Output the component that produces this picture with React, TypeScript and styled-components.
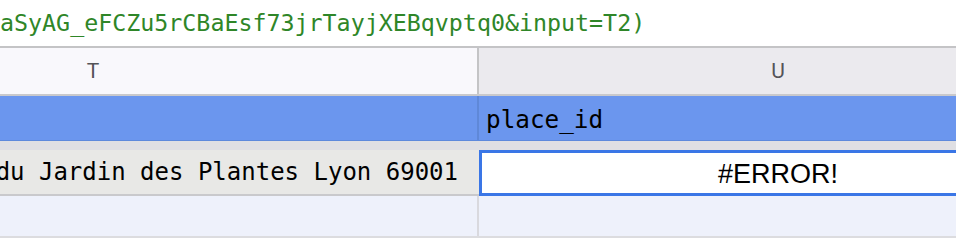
import styled, { createGlobalStyle } from 'styled-components';

const GlobalStyle = createGlobalStyle`
  html, body {
    margin: 0;
    padding: 0;
    background: #ffffff;
    overflow: hidden;
  }
  body {
    width: 956px;
    height: 244px;
  }
`;

const FORMULA = 'aSyAG_eFCZu5rCBaEsf73jrTayjXEBqvptq0&input=T2)';

export default function App() {
  return (
    <>
      <GlobalStyle />
      <Page>
        <FormulaBar>{FORMULA}</FormulaBar>
        <Grid>
          <HeaderRow>
            <HeaderCell $first>T</HeaderCell>
            <HeaderCell $active>U</HeaderCell>
          </HeaderRow>

          <BlueRow>
            <BlueCell $first />
            <BlueCell>place_id</BlueCell>
          </BlueRow>

          <FrozenBar />

          <DataRow>
            <AddressCell>du Jardin des Plantes Lyon 69001</AddressCell>
            <SelectedCell>#ERROR!</SelectedCell>
          </DataRow>

          <EmptyRow>
            <EmptyCell $first />
            <EmptyCell />
          </EmptyRow>
        </Grid>
      </Page>
    </>
  );
}

/* ── Styled components ───────────────────────────────────── */

const Page = styled.div`
  width: 956px;
  height: 244px;
  overflow: hidden;
  display: flex;
  flex-direction: column;
`;

const FormulaBar = styled.div`
  height: 46px;
  display: flex;
  align-items: center;
  padding-bottom: 2px;
  box-sizing: border-box;
  font-family: 'DejaVu Sans Mono', 'Liberation Mono', monospace;
  font-size: 23.3px;
  color: #2f8628;
  white-space: nowrap;
`;

const Grid = styled.div`
  display: flex;
  flex-direction: column;
  width: 1077px;
`;

const HeaderRow = styled.div`
  display: flex;
  height: 50px;
  box-sizing: border-box;
  border-top: 2px solid #c4c4c6;
  border-bottom: 2px solid #c9c9cc;
`;

const HeaderCell = styled.div<{ $first?: boolean; $active?: boolean }>`
  box-sizing: border-box;
  width: ${({ $first }) => ($first ? '479px' : '598px')};
  padding-right: ${({ $first }) => ($first ? '291px' : '0')};
  border-right: ${({ $first }) => ($first ? '2px solid #c4c4c6' : 'none')};
  background: ${({ $active }) => ($active ? '#ebeaee' : '#f9f8fc')};
  display: flex;
  align-items: center;
  justify-content: center;
  font-family: Roboto, 'Liberation Sans', sans-serif;
  font-size: 21px;
  color: #545458;
`;

const BlueRow = styled.div`
  display: flex;
  height: 45px;
  box-sizing: border-box;
  border-bottom: 1px solid #5d89dc;
  background: #6b96ee;
`;

const BlueCell = styled.div<{ $first?: boolean }>`
  box-sizing: border-box;
  width: ${({ $first }) => ($first ? '479px' : '598px')};
  border-right: ${({ $first }) => ($first ? '2px solid #5f88d8' : 'none')};
  display: flex;
  align-items: center;
  padding-left: 7px;
  padding-top: 2px;
  font-family: 'DejaVu Sans Mono', 'Liberation Mono', monospace;
  font-size: 24.3px;
  color: #000000;
`;

const FrozenBar = styled.div`
  height: 9px;
  background: #dfdfe3;
`;

const DataRow = styled.div`
  display: flex;
  height: 46px;
`;

const AddressCell = styled.div`
  box-sizing: border-box;
  width: 479px;
  height: 46px;
  border-bottom: 2px solid #c9c9cc;
  background: #e8e8e6;
  overflow: hidden;
  display: flex;
  align-items: center;
  justify-content: flex-end;
  padding-right: 21px;
  white-space: nowrap;
  font-family: 'DejaVu Sans Mono', 'Liberation Mono', monospace;
  font-size: 24px;
  color: #000000;
`;

const SelectedCell = styled.div`
  box-sizing: border-box;
  width: 598px;
  height: 46px;
  border: 3px solid #3a76e6;
  background: #ffffff;
  display: flex;
  align-items: center;
  justify-content: center;
  padding-top: 2px;
  font-family: 'Liberation Sans', Arial, sans-serif;
  font-size: 27px;
  color: #000000;
`;

const EmptyRow = styled.div`
  display: flex;
  height: 42px;
  box-sizing: border-box;
  border-bottom: 2px solid #dcdcdf;
  background: #eef1fb;
`;

const EmptyCell = styled.div<{ $first?: boolean }>`
  box-sizing: border-box;
  width: ${({ $first }) => ($first ? '479px' : '598px')};
  border-right: ${({ $first }) => ($first ? '2px solid #d9d9de' : 'none')};
`;
